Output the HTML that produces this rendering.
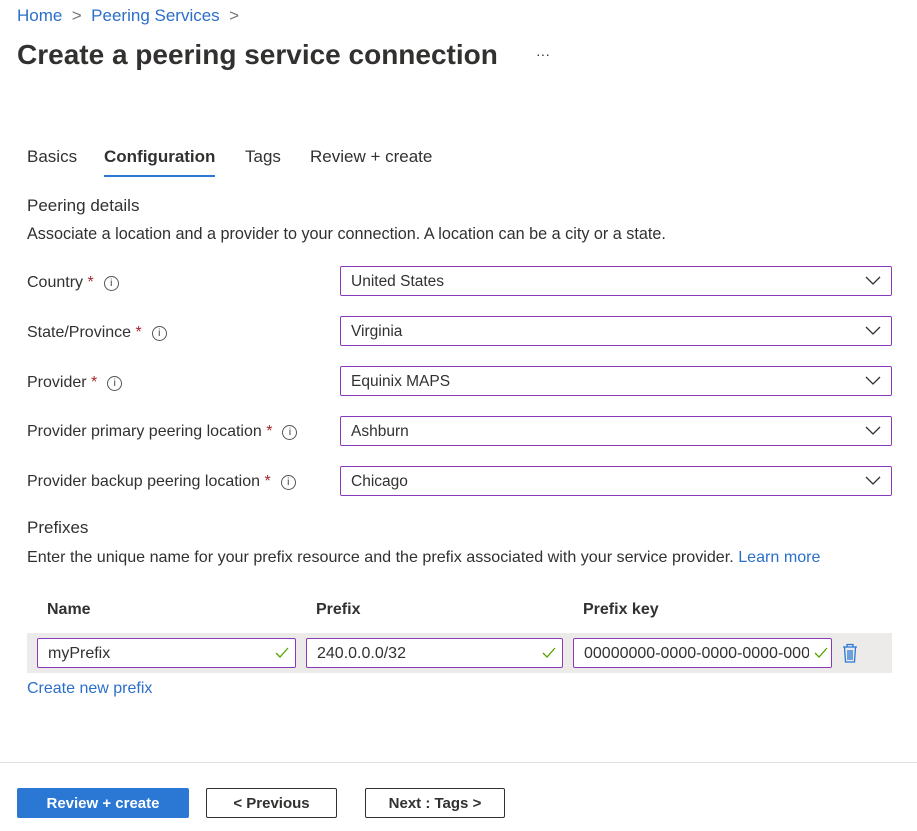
<!DOCTYPE html>
<html><head><style>
body{margin:0;width:917px;height:831px;background:#fff;font-family:"Liberation Sans",sans-serif;color:#323130;position:relative;overflow:hidden}
.a{position:absolute;white-space:nowrap}
.t{font-size:16px}
.dd{position:absolute;left:340px;height:28px;border:1px solid #8a3ab9;border-radius:2px;font-size:15.5px;display:flex;align-items:center;padding-left:10px;padding-top:2px;box-sizing:border-box;height:30px;width:552px}
.dd svg{position:absolute;right:10px;top:9px}
.lab{position:absolute;left:27px;font-size:16px}
.lab b{color:#a4262c;font-weight:normal}
.i{display:inline-block;width:13px;height:13px;border:1px solid #555;border-radius:50%;font-size:10px;line-height:13px;text-align:center;margin-left:10px;vertical-align:1px}
.in{position:absolute;top:638px;height:30px;box-sizing:border-box;padding-top:2px;border:1px solid #8a3ab9;border-radius:2px;background:#fff;font-size:16px;display:flex;align-items:center;padding-left:10px;overflow:hidden;white-space:nowrap}
.ck{position:absolute;right:6px;top:8px}
.btn{position:absolute;top:788px;height:28px;border:1px solid #323130;border-radius:2px;font-size:15px;font-weight:bold;display:flex;align-items:center;justify-content:center}
</style></head><body>
<div class="a" style="left:17px;top:6px;font-size:17px;color:#2b6fc9">Home <span style="color:#777">&nbsp;&gt;&nbsp;</span> Peering Services <span style="color:#777">&nbsp;&gt;</span></div>
<div class="a" style="left:17px;top:39px;font-size:28px;font-weight:bold;color:#323130">Create a peering service connection</div>
<div class="a" style="left:536px;top:46px;font-size:14px">···</div>
<div class="a" style="left:27px;top:147px;font-size:17px">Basics</div>
<div class="a" style="left:104px;top:147px;font-size:17px;font-weight:bold">Configuration</div>
<div class="a" style="left:104px;top:175px;width:111px;height:2px;background:#2b78d4"></div>
<div class="a" style="left:245px;top:147px;font-size:17px">Tags</div>
<div class="a" style="left:310px;top:147px;font-size:17px">Review + create</div>
<div class="a" style="left:27px;top:196px;font-size:17px">Peering details</div>
<div class="a" style="left:27px;top:225px;font-size:16.2px">Associate a location and a provider to your connection. A location can be a city or a state.</div>

<div class="lab" style="top:274px">Country <b>*</b><span class="i">i</span></div>
<div class="dd" style="top:266px">United States<svg width="16" height="10"><path d="M1 1l7 7 7-7" fill="none" stroke="#323130" stroke-width="1.3"/></svg></div>
<div class="lab" style="top:324px">State/Province <b>*</b><span class="i">i</span></div>
<div class="dd" style="top:316px">Virginia<svg width="16" height="10"><path d="M1 1l7 7 7-7" fill="none" stroke="#323130" stroke-width="1.3"/></svg></div>
<div class="lab" style="top:374px">Provider <b>*</b><span class="i">i</span></div>
<div class="dd" style="top:366px">Equinix MAPS<svg width="16" height="10"><path d="M1 1l7 7 7-7" fill="none" stroke="#323130" stroke-width="1.3"/></svg></div>
<div class="lab" style="top:423px">Provider primary peering location <b>*</b><span class="i">i</span></div>
<div class="dd" style="top:416px">Ashburn<svg width="16" height="10"><path d="M1 1l7 7 7-7" fill="none" stroke="#323130" stroke-width="1.3"/></svg></div>
<div class="lab" style="top:473px">Provider backup peering location <b>*</b><span class="i">i</span></div>
<div class="dd" style="top:466px">Chicago<svg width="16" height="10"><path d="M1 1l7 7 7-7" fill="none" stroke="#323130" stroke-width="1.3"/></svg></div>

<div class="a" style="left:27px;top:518px;font-size:17px">Prefixes</div>
<div class="a" style="left:27px;top:548px;font-size:16.1px">Enter the unique name for your prefix resource and the prefix associated with your service provider. <span style="color:#2b6fc9">Learn more</span></div>
<div class="a t" style="left:47px;top:601px;font-weight:bold">Name</div>
<div class="a t" style="left:316px;top:601px;font-weight:bold">Prefix</div>
<div class="a t" style="left:583px;top:601px;font-weight:bold">Prefix key</div>
<div class="a" style="left:27px;top:633px;width:865px;height:40px;background:#edebe9"></div>
<div class="in" style="left:37px;width:259px">myPrefix<svg class="ck" width="14" height="12"><path d="M1 6l4 4 8-9" fill="none" stroke="#57a300" stroke-width="1.3"/></svg></div>
<div class="in" style="left:306px;width:257px">240.0.0.0/32<svg class="ck" width="14" height="12"><path d="M1 6l4 4 8-9" fill="none" stroke="#57a300" stroke-width="1.3"/></svg></div>
<div class="in" style="left:573px;width:259px">00000000-0000-0000-0000-0000<svg class="ck" width="22" height="28" style="top:0;right:0;background:#fff"><path d="M6 14l4 4 8-9" fill="none" stroke="#57a300" stroke-width="1.3"/></svg></div>
<svg class="a" style="left:841px;top:643px" width="18" height="20"><path d="M2 4h14M6 4V1.5h6V4M3.5 4l1 15h9l1-15M7 7v10M9 7v10M11 7v10" fill="none" stroke="#2b78d4" stroke-width="1.3"/></svg>
<div class="a t" style="left:27px;top:680px;color:#2b6fc9">Create new prefix</div>

<div class="a" style="left:0;top:762px;width:917px;height:1px;background:#e1dfdd"></div>
<div class="btn" style="left:17px;width:170px;background:#2b78d4;border-color:#2b78d4;color:#fff">Review + create</div>
<div class="btn" style="left:206px;width:129px">&lt; Previous</div>
<div class="btn" style="left:365px;width:138px">Next : Tags &gt;</div>
</body></html>
